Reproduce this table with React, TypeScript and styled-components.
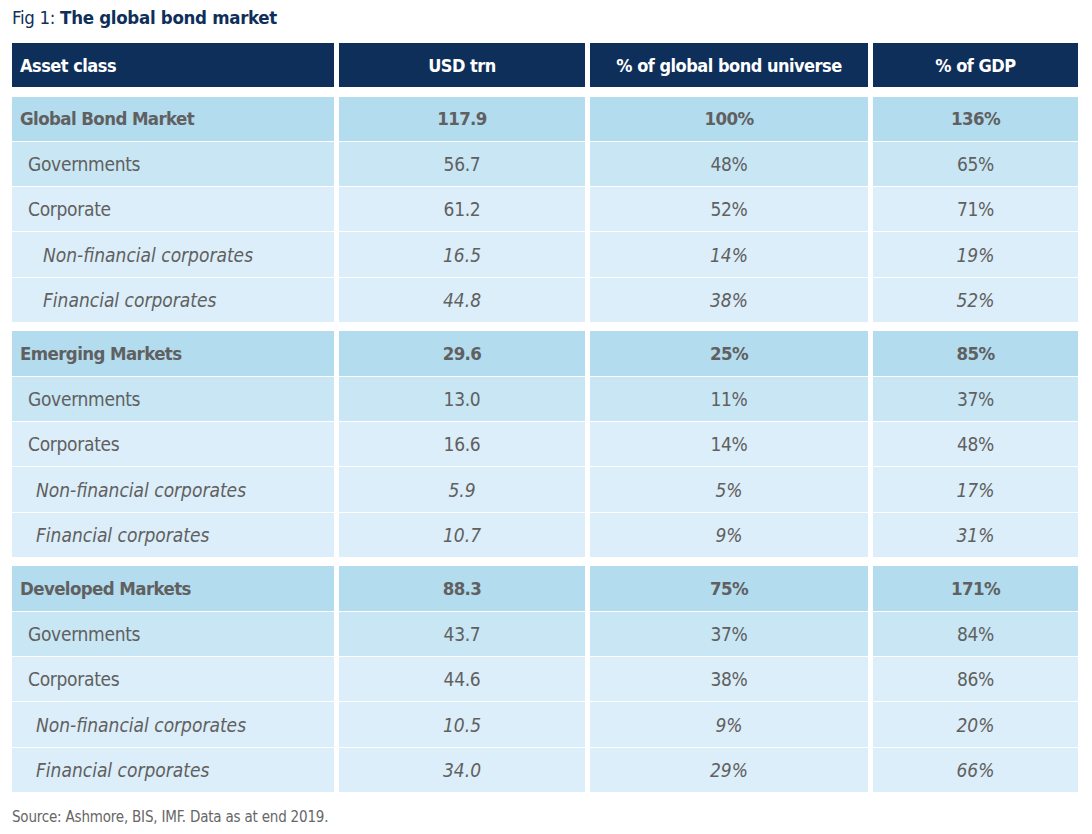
import React from 'react';
import styled, { createGlobalStyle } from 'styled-components';

type Kind = 'section' | 'sub' | 'detail';

interface RowData {
  label: string;
  usd: string;
  share: string;
  gdp: string;
  kind: Kind;
  indent: number;
  italic?: boolean;
}

interface GroupData {
  id: string;
  rows: RowData[];
}

const groups: GroupData[] = [{
  id: 'global',
  rows: [
    { label: 'Global Bond Market', usd: '117.9', share: '100%', gdp: '136%', kind: 'section', indent: 8 },
    { label: 'Governments', usd: '56.7', share: '48%', gdp: '65%', kind: 'sub', indent: 16 },
    { label: 'Corporate', usd: '61.2', share: '52%', gdp: '71%', kind: 'detail', indent: 16 },
    { label: 'Non-financial corporates', usd: '16.5', share: '14%', gdp: '19%', kind: 'detail', indent: 31, italic: true },
    { label: 'Financial corporates', usd: '44.8', share: '38%', gdp: '52%', kind: 'detail', indent: 31, italic: true }
  ]
}, {
  id: 'em',
  rows: [
    { label: 'Emerging Markets', usd: '29.6', share: '25%', gdp: '85%', kind: 'section', indent: 8 },
    { label: 'Governments', usd: '13.0', share: '11%', gdp: '37%', kind: 'sub', indent: 16 },
    { label: 'Corporates', usd: '16.6', share: '14%', gdp: '48%', kind: 'detail', indent: 16 },
    { label: 'Non-financial corporates', usd: '5.9', share: '5%', gdp: '17%', kind: 'detail', indent: 24, italic: true },
    { label: 'Financial corporates', usd: '10.7', share: '9%', gdp: '31%', kind: 'detail', indent: 24, italic: true }
  ]
}, {
  id: 'dm',
  rows: [
    { label: 'Developed Markets', usd: '88.3', share: '75%', gdp: '171%', kind: 'section', indent: 8 },
    { label: 'Governments', usd: '43.7', share: '37%', gdp: '84%', kind: 'sub', indent: 16 },
    { label: 'Corporates', usd: '44.6', share: '38%', gdp: '86%', kind: 'detail', indent: 16 },
    { label: 'Non-financial corporates', usd: '10.5', share: '9%', gdp: '20%', kind: 'detail', indent: 24, italic: true },
    { label: 'Financial corporates', usd: '34.0', share: '29%', gdp: '66%', kind: 'detail', indent: 24, italic: true }
  ]
}];

const FONT = `"DejaVu Sans Condensed", "Liberation Sans", sans-serif`;

const GlobalStyle = createGlobalStyle`
  html, body {
    margin: 0;
    padding: 0;
    background: #ffffff;
  }
  body {
    font-family: ${FONT};
  }
`;

const App = () => (
  <>
    <GlobalStyle />
    <Page>
      <Title>
        <span className="fig">Fig 1: </span>
        <strong>The global bond market</strong>
      </Title>
      <Table>
        <Row>
          <HeadCell $align="left">Asset class</HeadCell>
          <HeadCell>USD trn</HeadCell>
          <HeadCell>% of global bond universe</HeadCell>
          <HeadCell>% of GDP</HeadCell>
        </Row>
        {groups.map(group => (
          <Group key={group.id}>
            {group.rows.map(row => (
              <Row key={row.label}>
                <Cell $kind={row.kind} $italic={row.italic} $align="left" style={{ paddingLeft: row.indent }}>
                  {row.label}
                </Cell>
                <Cell $kind={row.kind} $italic={row.italic}>{row.usd}</Cell>
                <Cell $kind={row.kind} $italic={row.italic}>{row.share}</Cell>
                <Cell $kind={row.kind} $italic={row.italic}>{row.gdp}</Cell>
              </Row>
            ))}
          </Group>
        ))}
      </Table>
      <Source>Source: Ashmore, BIS, IMF. Data as at end 2019.</Source>
    </Page>
  </>
);

const Page = styled.div`
  width: 1092px;
  height: 834px;
  box-sizing: border-box;
  padding: 5px 14px 0 12px;
  font-family: ${FONT};
`;

const Title = styled.div`
  font-size: 18.5px;
  line-height: 26px;
  letter-spacing: -0.3px;
  color: #0f2f5b;

  .fig {
    font-weight: 400;
  }

  strong {
    font-weight: 700;
  }
`;

const Table = styled.div`
  margin-top: 12px;
  display: flex;
  flex-direction: column;
  gap: 9.5px;
`;

const Group = styled.div`
  display: flex;
  flex-direction: column;
  gap: 1px;
`;

const Row = styled.div`
  display: grid;
  grid-template-columns: 322px 246px 278px 205px;
  column-gap: 5px;
`;

const bg: Record<Kind, string> = {
  section: '#b3dcef',
  sub: '#c8e6f4',
  detail: '#dceef9'
};

const HeadCell = styled.div<{ $align?: 'left' | 'center' }>`
  height: 44px;
  display: flex;
  align-items: center;
  justify-content: ${p => (p.$align === 'left' ? 'flex-start' : 'center')};
  padding-left: ${p => (p.$align === 'left' ? '8px' : '0')};
  background: #0f2f5b;
  color: #ffffff;
  font-size: 18px;
  font-weight: 700;
  letter-spacing: -0.5px;
`;

const Cell = styled.div<{ $kind: Kind; $italic?: boolean; $align?: 'left' | 'center' }>`
  height: 44.3px;
  display: flex;
  align-items: center;
  justify-content: ${p => (p.$align === 'left' ? 'flex-start' : 'center')};
  background: ${p => bg[p.$kind]};
  color: #606060;
  font-size: ${p => (p.$kind === 'section' ? '18.5px' : '19px')};
  font-weight: ${p => (p.$kind === 'section' ? 700 : 400)};
  font-style: ${p => (p.$italic ? 'italic' : 'normal')};
  letter-spacing: ${p => (p.$kind === 'section' ? '-0.6px' : p.$italic ? '0' : '-0.3px')};
`;

const Source = styled.div`
  margin-top: 16px;
  font-size: 15px;
  letter-spacing: -0.2px;
  color: #666666;
`;

export default App;
